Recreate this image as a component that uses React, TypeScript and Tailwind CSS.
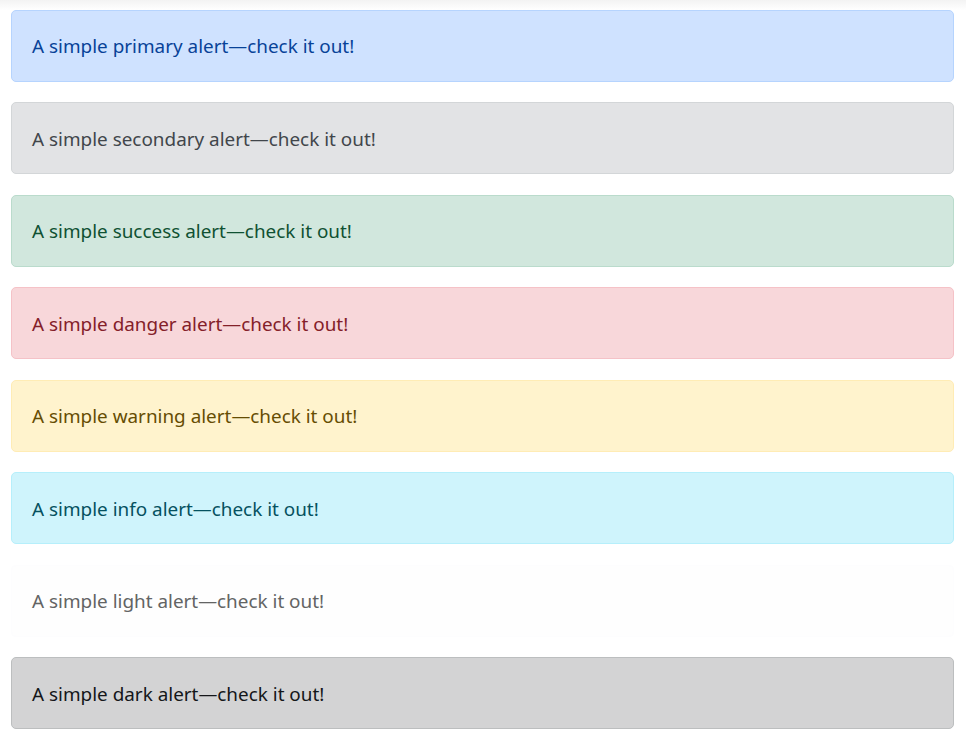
const alerts = [
  { name: "primary", cls: "bg-[#cfe2ff] border-[#b6d4fe] text-[#084298]" },
  { name: "secondary", cls: "bg-[#e2e3e5] border-[#d3d6d8] text-[#41464b]" },
  { name: "success", cls: "bg-[#d1e7dd] border-[#badbcc] text-[#0f5132]" },
  { name: "danger", cls: "bg-[#f8d7da] border-[#f5c2c7] text-[#842029]" },
  { name: "warning", cls: "bg-[#fff3cd] border-[#ffecb5] text-[#664d03]" },
  { name: "info", cls: "bg-[#cff4fc] border-[#b6effb] text-[#055160]" },
  { name: "light", cls: "bg-[#fefefe] border-[#fdfdfe] text-[#636464]" },
  { name: "dark", cls: "bg-[#d3d3d4] border-[#bcbebf] text-[#141619]" },
];

export default function App() {
  return (
    <div className="min-h-[738px] w-full bg-[linear-gradient(#f3f3f3,#ffffff_10px)] pt-[9.5px] pl-[11px] pr-[12px] font-['Noto_Sans',sans-serif]">
      {alerts.map((a) => (
        <div
          key={a.name}
          role="alert"
          className={`mb-[20.5px] h-[72px] rounded-[5px] border px-[20px] pt-px flex items-center text-[18.9px] leading-[30px] ${a.cls}`}
        >
          A simple {a.name} alert—check it out!
        </div>
      ))}
    </div>
  );
}
